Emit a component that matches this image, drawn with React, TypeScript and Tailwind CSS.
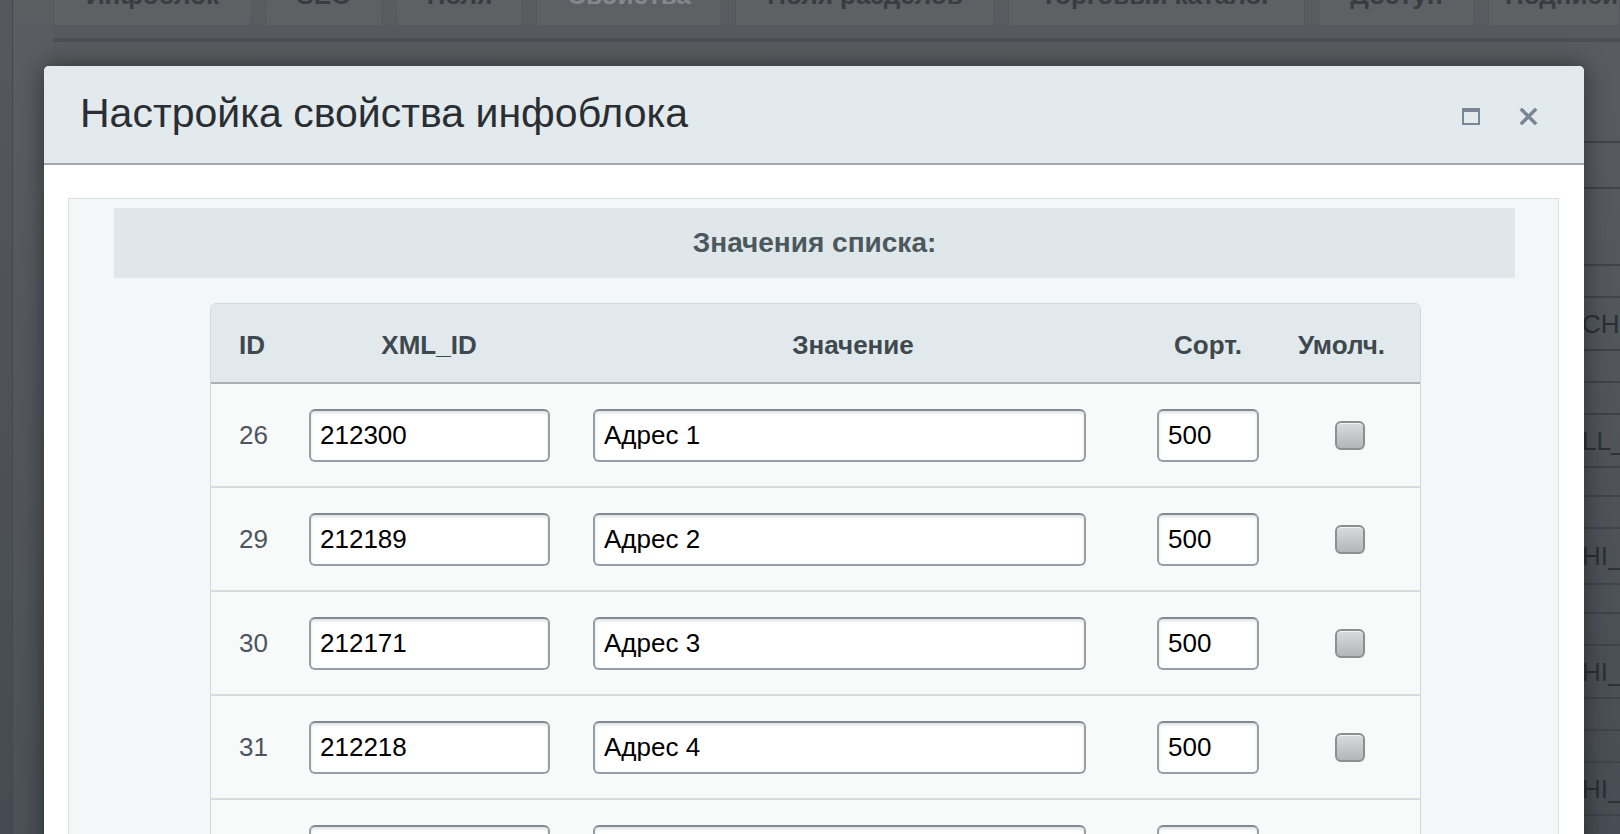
import { useState } from 'react'

const tabs = [
  { label: 'Инфоблок', w: 'w-[199px] justify-center' },
  { label: 'SEO', w: 'w-[118px] justify-center' },
  { label: 'Поля', w: 'w-[127px] justify-center' },
  { label: 'Свойства', w: 'w-[186px] justify-center', active: true },
  { label: 'Поля разделов', w: 'w-[260px] justify-center' },
  { label: 'Торговый каталог', w: 'w-[297px] justify-center' },
  { label: 'Доступ', w: 'w-[157px] justify-center' },
  { label: 'Подписи и заголовки', w: 'flex-1 justify-start pl-[16px]' },
]

const bgRows = [
  { h: 'h-[101px]' },
  { h: 'h-[46px]' },
  { h: 'h-[77px]' },
  { h: 'h-[32px]' },
  { h: 'h-[53px]', text: 'CHECKBOX' },
  { h: 'h-[32px]' },
  { h: 'h-[32px]' },
  { h: 'h-[53px]', text: 'LL_TYPE' },
  { h: 'h-[29px]' },
  { h: 'h-[32px]' },
  { h: 'h-[56px]', text: 'HI_BLOCK' },
  { h: 'h-[29px]' },
  { h: 'h-[32px]' },
  { h: 'h-[53px]', text: 'HI_TABLE' },
  { h: 'h-[32px]' },
  { h: 'h-[32px]' },
  { h: 'h-[53px]', text: 'HI_FIELD' },
  { h: 'h-[32px]' },
]

const initialRows = [
  { id: '26', xml: '212300', value: 'Адрес 1', sort: '500' },
  { id: '29', xml: '212189', value: 'Адрес 2', sort: '500' },
  { id: '30', xml: '212171', value: 'Адрес 3', sort: '500' },
  { id: '31', xml: '212218', value: 'Адрес 4', sort: '500' },
  { id: '32', xml: '212254', value: 'Адрес 5', sort: '500' },
]

const inputCls =
  'h-[53px] rounded-[6px] border-2 border-[#949ea8] border-t-[#7f8a95] bg-white pl-[9px] text-[26px] text-black outline-none shadow-[inset_0_2px_3px_rgba(0,0,0,0.12)]'

function Checkbox({ checked, onChange }: { checked: boolean; onChange: () => void }) {
  return (
    <button
      onClick={onChange}
      className="flex h-[29px] w-[30px] items-center justify-center rounded-[6px] border-2 border-[#8c9094] bg-gradient-to-b from-[#d9dbdd] to-[#b3b6b9] shadow-[inset_0_1px_0_rgba(255,255,255,0.7)]"
    >
      {checked && <span className="text-[18px] leading-none text-[#3a4148]">✓</span>}
    </button>
  )
}

export default function App() {
  const [rows, setRows] = useState(initialRows.map((r) => ({ ...r, def: false })))

  const update = (i: number, key: 'xml' | 'value' | 'sort', v: string) =>
    setRows((rs) => rs.map((r, j) => (j === i ? { ...r, [key]: v } : r)))

  return (
    <div className="relative h-[834px] w-[1620px] overflow-hidden bg-[#55585d] font-['Liberation_Sans',Arial,sans-serif]">
      {/* page behind the dialog */}
      <div className="flex h-full">
        <div className="w-[13px] shrink-0 border-r border-[#44484d] bg-gradient-to-b from-[#55585c] to-[#454b52]" />
        <div className="w-[40px] shrink-0 bg-gradient-to-b from-[#5b5d61] to-[#4b5158]" />
        <div className="flex min-w-0 flex-1 flex-col overflow-hidden bg-gradient-to-b from-[#5a5c60] to-[#474d54]">
          <div className="flex h-[25px] shrink-0 gap-[13px]">
            {tabs.map((t) => (
              <div
                key={t.label}
                className={`${t.w} flex shrink-0 items-end overflow-hidden border-x border-[#54575b] bg-[#5e6064] pb-[17px]`}
              >
                <span
                  className={`whitespace-nowrap text-[26px] font-bold leading-none ${
                    t.active ? 'text-[#85888c]' : 'text-[#393c40]'
                  }`}
                >
                  {t.label}
                </span>
              </div>
            ))}
          </div>
          <div className="h-[13px] shrink-0 bg-[#56595d]" />
          <div className="h-[4px] shrink-0 bg-[#4c4f53]" />
          <div className="flex flex-1 flex-col">
            {bgRows.map((r, i) => (
              <div key={i} className={`${r.h} flex shrink-0 items-center border-b-2 border-[#3e444a] pl-[1529px]`}>
                {r.text && <span className="whitespace-nowrap text-[26px] leading-none text-[#2b3035]">{r.text}</span>}
              </div>
            ))}
          </div>
        </div>
      </div>

      {/* dialog */}
      <div className="absolute left-[44px] top-[66px] flex w-[1540px] flex-col overflow-hidden rounded-t-[5px] bg-white shadow-[0_0_24px_rgba(0,0,0,0.45)]">
        <div className="flex h-[99px] items-center justify-between border-b-2 border-[#a4a8ab] bg-[#e3eaed] pl-[36px] pr-[46px]">
          <h1 className="pb-[2px] text-[41px] font-normal leading-none text-[#2a2e32]">
            Настройка свойства инфоблока
          </h1>
          <div className="flex items-center gap-[39px] pt-[4px]">
            <button className="h-[17px] w-[18px] border-2 border-t-[4px] border-[#7b8797]" aria-label="Развернуть" />
            <button aria-label="Закрыть" className="flex h-[19px] w-[19px] items-center justify-center">
              <svg width="19" height="17" viewBox="0 0 19 17">
                <path d="M3 2 L16 15 M16 2 L3 15" stroke="#7a8696" strokeWidth="3.4" strokeLinecap="square" />
              </svg>
            </button>
          </div>
        </div>

        <div className="pl-[24px] pr-[25px] pt-[33px]">
          <div className="h-[700px] border border-[#d6e1e5] bg-[#f4f7f8] pl-[45px] pr-[43px] pt-[9px]">
            <div className="flex h-[70px] items-center justify-center bg-[#e0e7ea]">
              <span className="text-[28px] font-bold text-[#4b585e]">Значения списка:</span>
            </div>

            <div className="ml-[96px] mt-[25px] w-[1211px] overflow-hidden rounded-t-[6px] border border-[#cfd8dc] bg-[#f8fafa]">
              <div className="grid h-[80px] grid-cols-[88px_260px_588px_122px_1fr] items-center border-b-2 border-[#a9b0b4] bg-[#e2e9ec] pt-[4px] text-[26px] font-bold text-[#3e484e]">
                <div className="pl-[28px]">ID</div>
                <div className="text-center">XML_ID</div>
                <div className="text-center">Значение</div>
                <div className="text-center">Сорт.</div>
                <div className="pr-[6px] text-center">Умолч.</div>
              </div>

              {rows.map((r, i) => (
                <div
                  key={r.id}
                  className="grid h-[104px] grid-cols-[88px_260px_588px_122px_1fr] items-center border-b-2 border-[#d4dce0]"
                >
                  <div className="pl-[28px] text-[26px] text-[#4c5560]">{r.id}</div>
                  <div className="pl-[10px]">
                    <input className={`${inputCls} w-[241px]`} value={r.xml} onChange={(e) => update(i, 'xml', e.target.value)} />
                  </div>
                  <div className="pl-[34px]">
                    <input className={`${inputCls} w-[493px]`} value={r.value} onChange={(e) => update(i, 'value', e.target.value)} />
                  </div>
                  <div className="pl-[10px]">
                    <input className={`${inputCls} w-[102px]`} value={r.sort} onChange={(e) => update(i, 'sort', e.target.value)} />
                  </div>
                  <div className="pl-[66px]">
                    <Checkbox
                      checked={r.def}
                      onChange={() => setRows((rs) => rs.map((x, j) => (j === i ? { ...x, def: !x.def } : x)))}
                    />
                  </div>
                </div>
              ))}
            </div>
          </div>
        </div>
      </div>
    </div>
  )
}
